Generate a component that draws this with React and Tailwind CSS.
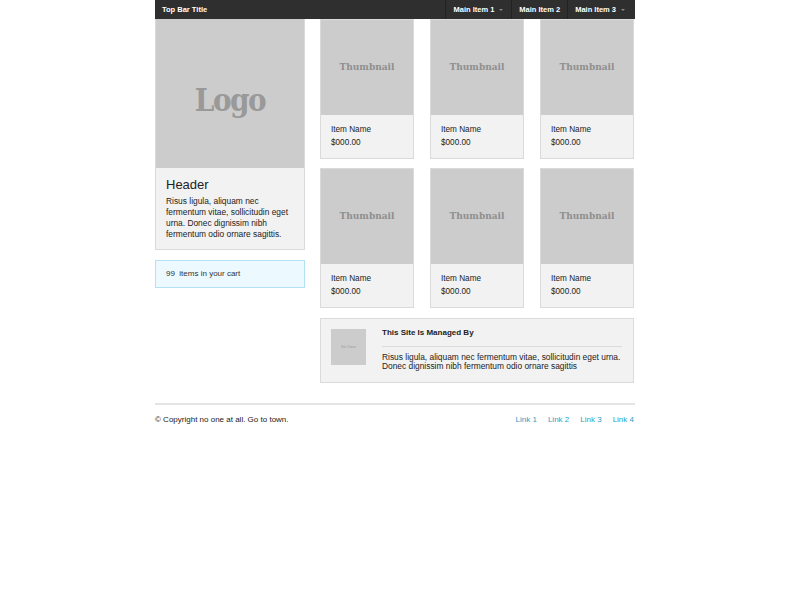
const items = [1, 2, 3, 4, 5, 6];

const Product = () => (
  <div className="border border-[#dadada] bg-[#f2f2f2]">
    <div className="h-[95px] bg-[#cccccc] flex items-center justify-center">
      <span className="text-[9px] text-[#8f8f8f] font-bold" style={{ fontFamily: "'DejaVu Serif', serif" }}>Thumbnail</span>
    </div>
    <div className="px-[10px] pt-[8px] pb-[9px] text-[8.2px] text-[#222] leading-[13px]">
      <p>Item Name</p>
      <p>$000.00</p>
    </div>
  </div>
);

const Caret = () => (
  <span className="ml-[5px] inline-block w-0 h-0 border-l-[2px] border-r-[2px] border-t-[2px] border-l-transparent border-r-transparent border-t-[#888]" />
);

export default function App() {
  return (
    <div className="w-[800px] min-h-[600px] bg-white" style={{ fontFamily: "'Liberation Sans', Arial, sans-serif" }}>
      <div className="w-[480px] ml-[155px]">
        {/* top bar */}
        <div className="h-[19px] bg-[#2f2f2f] flex items-center justify-between text-white font-bold text-[7.5px]">
          <div className="pl-[7px]">Top Bar Title</div>
          <div className="flex h-full">
            <div className="flex items-center h-full pl-[7px] pr-[8px] border-l border-[#222]">Main Item 1<Caret /></div>
            <div className="flex items-center h-full pl-[7px] pr-[7px] border-l border-[#222]">Main Item 2</div>
            <div className="flex items-center h-full pl-[7px] pr-[10px] border-l border-[#222]">Main Item 3<Caret /></div>
          </div>
        </div>

        <div className="flex gap-[15px]">
          {/* left column */}
          <div className="w-[150px] shrink-0">
            <div className="border-x border-b border-[#dadada] bg-[#f2f2f2]">
              <div className="h-[149px] bg-[#cccccc] flex items-center justify-center">
                <span className="text-[31px] font-bold text-[#999] tracking-[-1.5px] pt-[14px]" style={{ fontFamily: "'DejaVu Serif', serif", fontStretch: "condensed" }}>Logo</span>
              </div>
              <div className="px-[10px] pt-[8px] pb-[9px]">
                <h3 className="text-[13px] text-[#222] leading-[18px] mb-[2px]">Header</h3>
                <p className="text-[8.4px] leading-[11px] text-[#222]">Risus ligula, aliquam nec fermentum vitae, sollicitudin eget urna. Donec dignissim nibh fermentum odio ornare sagittis.</p>
              </div>
            </div>
            <div className="mt-[10px] h-[28px] border border-[#b3e2f3] bg-[#ecf9fe] flex items-center px-[10px] text-[8px] text-[#333]">
              99&nbsp;&nbsp;items in your cart
            </div>
          </div>

          {/* right column */}
          <div className="w-[314px]">
            <div className="grid grid-cols-3 gap-x-[16px] gap-y-[9px]">
              {items.map((i) => (
                <Product key={i} />
              ))}
            </div>
            <div className="mt-[10px] border border-[#dadada] bg-[#f2f2f2] flex p-[10px] pr-[11px] h-[65px]">
              <div className="w-[35px] h-[36px] bg-[#cccccc] flex items-center justify-center shrink-0">
                <span className="text-[3px] text-[#999]">Site Owner</span>
              </div>
              <div className="ml-[16px] flex-1">
                <h5 className="text-[8px] font-bold text-[#222] leading-[9px] mt-[-1px]">This Site Is Managed By</h5>
                <div className="border-t border-[#dcdcdc] mt-[9px] mb-[6px]" />
                <p className="text-[8.4px] leading-[8.5px] text-[#222]">Risus ligula, aliquam nec fermentum vitae, sollicitudin eget urna. Donec dignissim nibh fermentum odio ornare sagittis</p>
              </div>
            </div>
          </div>
        </div>

        {/* footer */}
        <div className="mt-[20px] border-t-2 border-[#e4e4e4] pt-[9px] flex justify-between text-[8px]">
          <p className="text-[#222]">© Copyright no one at all. Go to town.</p>
          <div className="flex gap-[11px] pr-[1px] text-[#2a9fc6]">
            <span>Link 1</span>
            <span>Link 2</span>
            <span>Link 3</span>
            <span>Link 4</span>
          </div>
        </div>
      </div>
    </div>
  );
}
